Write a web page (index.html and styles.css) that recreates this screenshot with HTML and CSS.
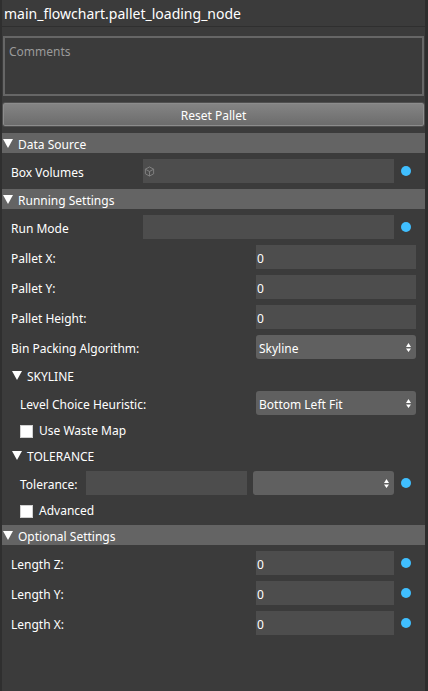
FILE: index.html
```html
<!DOCTYPE html>
<html lang="en">
<head>
<meta charset="utf-8">
<meta name="viewport" content="width=device-width, initial-scale=1">
<title>main_flowchart.pallet_loading_node</title>
<link rel="stylesheet" href="styles.css">
</head>
<body>
<main class="panel">
  <h1 class="title">main_flowchart.pallet_loading_node</h1>
  <div class="content">
    <textarea class="comments" placeholder="Comments" aria-label="Comments"></textarea>
    <button class="reset" type="button">Reset Pallet</button>

    <details class="section" open>
      <summary class="bar"><svg class="arrow" viewBox="0 0 10 9"><path d="M0 0h10L5 9z"/></svg>Data Source</summary>
      <div class="row">
        <label class="label medium" for="volumes">Box Volumes</label>
        <div class="field with-icon">
          <svg class="cube" viewBox="0 0 12 12"><path d="M6 1l4.500 2.500v5L6 11 1.500 8.500v-5zM1.500 3.500L6 6l4.500-2.500M6 6v5"/></svg>
          <input class="plain" id="volumes" type="text">
        </div>
        <span class="dot"></span>
      </div>
    </details>

    <details class="section" open>
      <summary class="bar"><svg class="arrow" viewBox="0 0 10 9"><path d="M0 0h10L5 9z"/></svg>Running Settings</summary>
      <div class="row">
        <label class="label medium" for="mode">Run Mode</label>
        <input class="field" id="mode" type="text">
        <span class="dot"></span>
      </div>
      <div class="row">
        <label class="label wide" for="px">Pallet X:</label>
        <input class="field" id="px" type="text" value="0">
      </div>
      <div class="row">
        <label class="label wide" for="py">Pallet Y:</label>
        <input class="field" id="py" type="text" value="0">
      </div>
      <div class="row">
        <label class="label wide" for="ph">Pallet Height:</label>
        <input class="field" id="ph" type="text" value="0">
      </div>
      <div class="row">
        <label class="label wide" for="algo">Bin Packing Algorithm:</label>
        <div class="combo">
          <select id="algo"><option>Skyline</option></select>
          <svg class="updown" viewBox="0 0 5 9"><path d="M0 4L2.500 0 5 4zM0 5.500h5L2.500 9z"/></svg>
        </div>
      </div>

      <details class="section" open>
        <summary class="bar sub"><svg class="arrow" viewBox="0 0 10 9"><path d="M0 0h10L5 9z"/></svg>SKYLINE</summary>
        <div class="row nested">
          <label class="label wide" for="level">Level Choice Heuristic:</label>
          <div class="combo">
            <select id="level"><option>Bottom Left Fit</option></select>
            <svg class="updown" viewBox="0 0 5 9"><path d="M0 4L2.500 0 5 4zM0 5.500h5L2.500 9z"/></svg>
          </div>
        </div>
        <label class="check"><input type="checkbox">Use Waste Map</label>
      </details>

      <details class="section" open>
        <summary class="bar sub"><svg class="arrow" viewBox="0 0 10 9"><path d="M0 0h10L5 9z"/></svg>TOLERANCE</summary>
        <div class="row nested">
          <label class="label narrow" for="tol">Tolerance:</label>
          <div class="pair">
            <input class="field" id="tol" type="text">
            <div class="combo">
              <select aria-label="Tolerance unit"><option></option></select>
              <svg class="updown" viewBox="0 0 5 9"><path d="M0 4L2.500 0 5 4zM0 5.500h5L2.500 9z"/></svg>
            </div>
          </div>
          <span class="dot"></span>
        </div>
        <label class="check"><input type="checkbox">Advanced</label>
      </details>
    </details>

    <details class="section" open>
      <summary class="bar"><svg class="arrow" viewBox="0 0 10 9"><path d="M0 0h10L5 9z"/></svg>Optional Settings</summary>
      <div class="row">
        <label class="label wide" for="lz">Length Z:</label>
        <input class="field" id="lz" type="text" value="0">
        <span class="dot"></span>
      </div>
      <div class="row">
        <label class="label wide" for="ly">Length Y:</label>
        <input class="field" id="ly" type="text" value="0">
        <span class="dot"></span>
      </div>
      <div class="row">
        <label class="label wide" for="lx">Length X:</label>
        <input class="field" id="lx" type="text" value="0">
        <span class="dot"></span>
      </div>
    </details>
  </div>
</main>
</body>
</html>
```
FILE: styles.css
```css
* {
  box-sizing: border-box;
}

body {
  margin: 0;
  background: #3b3b3b;
  color: #fff;
  font-family: "Noto Sans", sans-serif;
  font-size: 12px;
  line-height: 20px;
}

input,
select,
textarea,
button {
  margin: 0;
  color: inherit;
  font: inherit;
}

.panel {
  min-height: 100vh;
  border-left: 2px solid #2f2f2f;
  border-right: 3px solid #2d2d2d;
}

.title {
  margin: 0;
  padding: 4px 2px 2px;
  border-bottom: 1px solid #2f2f2f;
  font-size: 14px;
  font-weight: 400;
  line-height: 20px;
}

.content {
  display: flex;
  flex-direction: column;
  padding-top: 9px;
}

.comments {
  display: block;
  height: 60px;
  margin: 0 1px 6px;
  padding: 4px;
  border: 2px solid #666;
  border-radius: 0;
  background: transparent;
  resize: none;
  outline: none;
}

.comments::placeholder {
  color: #9a9a9a;
}

.reset {
  height: 25px;
  margin: 0 0 6px;
  padding: 2px 0 0;
  border: 1px solid #505050;
  border-radius: 3px;
  background: linear-gradient(#858585, #6b6b6b);
  box-shadow: inset 0 0 0 1px #8c8c8c;
}

.bar {
  display: flex;
  align-items: center;
  gap: 5px;
  height: 20px;
  margin-bottom: 6px;
  padding: 4px 0 0 1px;
  background: #646464;
  list-style: none;
}

.sub {
  padding-left: 10px;
  background: none;
}

.arrow {
  width: 10px;
  height: 9px;
  margin-bottom: 4px;
  fill: #fff;
}

.row {
  display: flex;
  align-items: center;
  height: 24px;
  margin-bottom: 6px;
  padding: 0 9px;
}

.nested {
  padding-left: 18px;
}

.label {
  flex: none;
  padding-top: 4px;
}

.narrow {
  width: 66px;
}

.medium {
  width: 132px;
}

.wide {
  width: 245px;
}

.nested .wide {
  width: 236px;
}

.field {
  flex: 1;
  min-width: 0;
  height: 24px;
  padding: 2px 1px 0;
  border: 0;
  background: #4d4d4d;
  outline: none;
}

.with-icon {
  display: flex;
  align-items: center;
  padding: 0 1px;
}

.cube {
  width: 11px;
  height: 11px;
  fill: none;
  stroke: #858585;
}

.plain {
  flex: 1;
  min-width: 0;
  border: 0;
  background: none;
  outline: none;
}

.dot {
  flex: none;
  width: 10px;
  height: 10px;
  margin: 0 5px 0 7px;
  border-radius: 50%;
  background: #40bfff;
}

.pair {
  display: grid;
  flex: 1;
  grid-template-columns: 8fr 7fr;
  gap: 6px;
}

.combo {
  display: grid;
  flex: 1;
  align-items: center;
}

.combo > * {
  grid-area: 1 / 1;
}

.combo select {
  width: 100%;
  height: 24px;
  padding: 4px 3px 0;
  border: 0;
  border-radius: 3px;
  background: #606060;
  appearance: none;
  outline: none;
}

.updown {
  justify-self: end;
  width: 5px;
  height: 9px;
  margin-right: 5px;
  fill: #fff;
  pointer-events: none;
}

.check {
  display: flex;
  align-items: center;
  gap: 6px;
  height: 18px;
  margin-bottom: 6px;
  padding: 2px 0 0 18px;
}

.check input {
  width: 13px;
  height: 13px;
  border: 1px solid #d0d0d0;
  background: #fff;
  appearance: none;
}
```
